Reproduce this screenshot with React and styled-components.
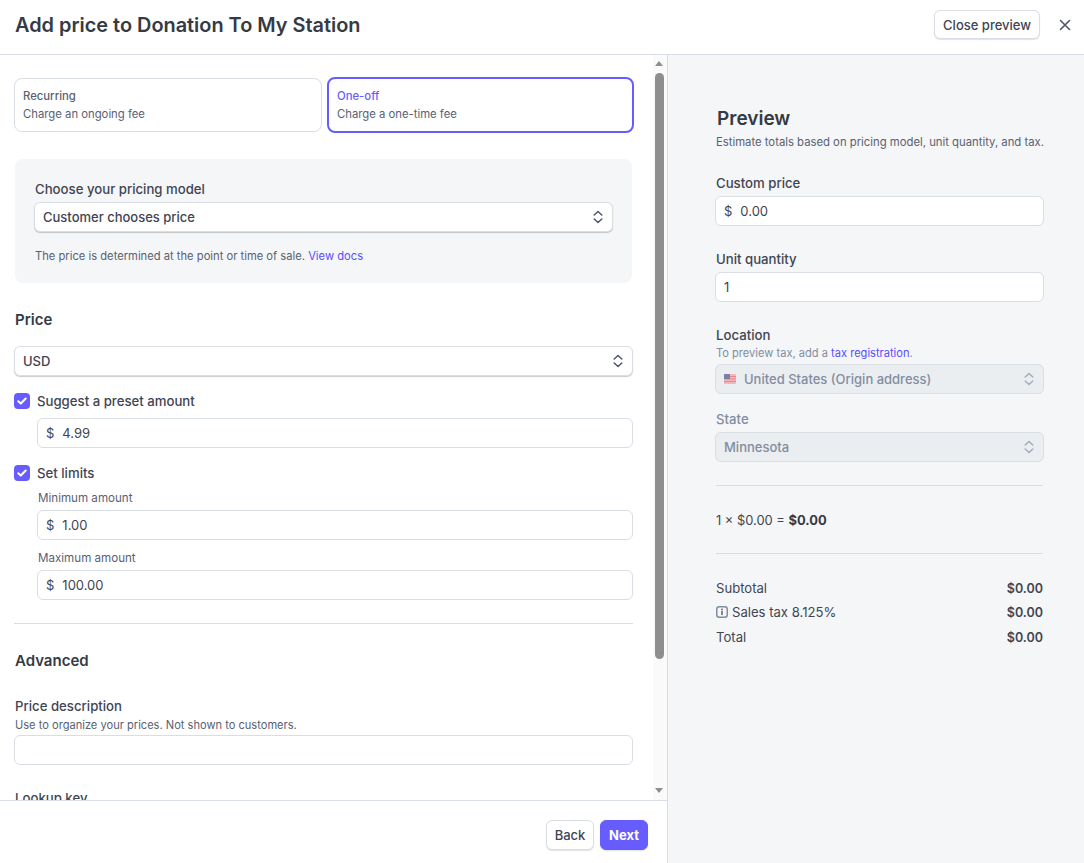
import React from "react";
import styled, { createGlobalStyle } from "styled-components";

const Global = createGlobalStyle`
  html, body { margin: 0; padding: 0; height: 100%; background: #fff; }
  body { font-family: Inter, "Liberation Sans", sans-serif; color: #353a44; }
  * { box-sizing: border-box; }
`;

const Page = styled.div`
  width: 1084px; height: 863px; display: flex; flex-direction: column; overflow: hidden;
`;
const Header = styled.header`
  height: 55px; flex: none; display: flex; align-items: center; padding: 0 11px 5px 15px;
  border-bottom: 1px solid #d8dee4; background: #fff;
`;
const Title = styled.h1`
  margin: 0; flex: 1; font-size: 19.9px; line-height: 28px; font-weight: 600; color: #353a44;
`;
const Button = styled.button`
  font-family: inherit; font-size: 13px; font-weight: 500; line-height: 20px; height: 29px; padding: 0 8px;
  color: #414552; background: #fff; border: 1px solid #d8dee4; border-radius: 6px;
  box-shadow: 0 1px 1px rgba(0,0,0,.12);
`;
const PrimaryButton = styled(Button)`
  background: #675dff; color: #fff; border-color: #675dff; font-weight: 700;
`;
const CloseX = styled.button`
  width: 16px; height: 16px; margin-left: 17px; padding: 0; border: 0; background: none; display: flex; color: #50566b;
`;
const Body = styled.div`
  flex: 1; min-height: 0; display: flex;
`;
const Left = styled.section`
  width: 668px; flex: none; display: flex; flex-direction: column; border-right: 1px solid #d8dee4; background: #fff;
`;
const ScrollFrame = styled.div`
  flex: 1; min-height: 0; display: flex;
`;
const Scroll = styled.div`
  flex: 1; min-width: 0; overflow: hidden; padding: 22px 20px 0 14px;
`;
const ScrollBar = styled.div`
  width: 14px; flex: none; background: #fafafa; display: flex; flex-direction: column; align-items: flex-start; padding-left: 2px;
`;
const ScrollArrow = styled.div`
  width: 0; height: 0; flex: none;
  border-left: 4.5px solid transparent; border-right: 4.5px solid transparent;
  ${p => (p.$down
    ? "border-top: 5px solid #8e8e8e; margin-top: auto; margin-bottom: 7px;"
    : "border-bottom: 5px solid #8e8e8e; margin-top: 6px;")}
`;
const ScrollThumb = styled.div`
  width: 9px; height: 586px; flex: none; margin-top: 7px; border-radius: 5px; background: #8e8e8e;
`;
const Footer = styled.footer`
  height: 63px; flex: none; border-top: 1px solid #d8dee4; display: flex; justify-content: flex-end; align-items: flex-start;
  gap: 6px; padding: 19px 19px 0 0;
  & > button { height: 30px; width: 48px; padding: 0; }
`;
const CardRow = styled.div`
  display: grid; grid-template-columns: 308px 307px; gap: 5px; align-items: center;
`;
const Card = styled.div`
  height: ${p => (p.$active ? "56px" : "54px")};
  padding: 8px;
  border-radius: 8px;
  border: ${p => (p.$active ? "2px solid #675dff" : "1px solid #d8dee4")};
  font-size: 11.3px; line-height: 18px; color: #596171;
`;
const CardTitle = styled.div`
  font-weight: 500; color: ${p => (p.$active ? "#675dff" : "#596171")};
`;
const ModelBox = styled.div`
  margin: 26px 1px 0; height: 124px; padding: 20px 19px; background: #f5f6f8; border-radius: 8px;
`;
const Label = styled.div`
  font-size: 13.2px; line-height: 20px; font-weight: 500; color: ${p => (p.$muted ? "#818da0" : "#414552")};
  margin: ${p => p.$top || 0}px 0 0 1px;
`;
const SmallLabel = styled.div`
  font-size: 11.6px; line-height: 16px; color: #596171; margin: ${p => p.$top || 0}px 0 4px 1px;
`;
const Help = styled.div`
  font-size: ${p => p.$size || 11.1}px; line-height: 16px; color: ${p => (p.$muted ? "#818da0" : "#596171")};
  margin: ${p => p.$top || 0}px 0 ${p => p.$bottom || 0}px 1px;
`;
const Note = styled.div`
  font-size: 11.2px; line-height: 16px; color: #596171; margin: 16px 0 0 1px;
`;
const Link = styled.a`
  color: #5b4dff; text-decoration: none;
`;
const Select = styled.div`
  height: 30px; display: flex; align-items: center; justify-content: space-between; gap: 8px; padding: 0 8px;
  margin-top: ${p => p.$top || 0}px;
  border: 1px solid #d8dee4; border-radius: 6px;
  background: ${p => (p.$disabled ? "#ebeef1" : "#fff")};
  box-shadow: ${p => (p.$disabled ? "none" : "0 1px 1px rgba(0,0,0,.2)")};
  font-size: 13px; font-weight: 550; color: ${p => (p.$disabled ? "#818da0" : "#414552")};
`;
const SelectValue = styled.span`
  display: flex; align-items: center; gap: 8px;
`;
const Input = styled.div`
  height: 30px; display: flex; align-items: center; padding: 0 8px; gap: 8px;
  margin-top: ${p => p.$top || 0}px;
  border: 1px solid #d8dee4; border-radius: 6px; background: #fff;
  font-size: 13px; color: #414552;
`;
const Heading = styled.h2`
  margin: ${p => p.$top}px 0 ${p => p.$bottom}px 1px; font-size: 15px; line-height: 20px; font-weight: 600; color: #353a44;
`;
const CheckRow = styled.div`
  display: flex; align-items: center; gap: 7px; height: 16px; margin-top: ${p => p.$top}px; margin-bottom: ${p => p.$bottom || 0}px;
  font-size: 13.2px; font-weight: 500; color: #414552;
`;
const CheckBox = styled.span`
  width: 16px; height: 16px; flex: none; border-radius: 4px; background: #675dff; display: flex; align-items: center; justify-content: center;
`;
const Indent = styled.div`
  margin-left: 23px;
`;
const Divider = styled.hr`
  border: 0; border-top: 1px solid #d8dee4; margin: ${p => p.$top}px ${p => p.$inset || 0}px ${p => p.$bottom}px;
`;
const Right = styled.aside`
  flex: 1; background: #f5f6f8; padding: 50px 40px 0 47px;
`;
const PreviewTitle = styled.h2`
  margin: 0 0 0 2px; font-size: 19px; line-height: 28px; font-weight: 600; color: #353a44;
`;
const Total = styled.div`
  display: flex; justify-content: space-between; align-items: center; height: 24.5px; padding: 0 1px; font-size: 13.1px; color: #414552;
`;
const TotalValue = styled.span`
  font-size: 12.5px; font-weight: 600; color: #414552;
`;
const TaxLabel = styled.span`
  display: flex; align-items: center; gap: 4px; margin-top: -1px;
`;
const Equation = styled.div`
  margin-left: 1px; font-size: 12.9px; line-height: 20px; color: #414552;
`;
const Strong = styled.strong`
  font-weight: 700; color: #353a44;
`;

const Updown = ({ color = "#50566b" }) => (
  <svg width="12" height="14" viewBox="0 0 12 14" fill="none" stroke={color} strokeWidth="1.5" strokeLinecap="round" strokeLinejoin="round">
    <path d="M2.2 5 6 1.5 9.8 5M2.2 9 6 12.5 9.8 9" />
  </svg>
);
const Check = () => (
  <svg width="10" height="8" viewBox="0 0 10 8" fill="none" stroke="#fff" strokeWidth="2" strokeLinecap="round" strokeLinejoin="round">
    <path d="M1.3 4.2 3.8 6.5 8.7 1.5" />
  </svg>
);
const Flag = () => (
  <svg width="12" height="10" viewBox="0 0 12 10">
    <rect width="12" height="10" rx="1" fill="#f3b7bb" />
    <path d="M0 2.5h12M0 5h12M0 7.5h12" stroke="#e8848b" strokeWidth="1" />
    <rect width="6" height="5" fill="#7a7fa8" />
  </svg>
);
const Info = () => (
  <svg width="12" height="12" viewBox="0 0 12 12" fill="none">
    <rect x=".75" y=".75" width="10.5" height="10.5" rx="2.5" stroke="#818da0" strokeWidth="1.5" />
    <path d="M6 5.4v3" stroke="#596171" strokeWidth="1.5" strokeLinecap="round" />
    <circle cx="6" cy="3.4" r=".9" fill="#596171" />
  </svg>
);

export default function App() {
  return (
    <Page>
      <Global />
      <Header>
        <Title>Add price to Donation To My Station</Title>
        <Button>Close preview</Button>
        <CloseX aria-label="Close">
          <svg width="16" height="16" viewBox="0 0 16 16" fill="none" stroke="currentColor" strokeWidth="1.6" strokeLinecap="round">
            <path d="M3.5 3.5 12.5 12.5M12.5 3.5 3.5 12.5" />
          </svg>
        </CloseX>
      </Header>
      <Body>
        <Left>
          <ScrollFrame>
            <Scroll>
              <CardRow>
                <Card>
                  <CardTitle>Recurring</CardTitle>
                  <div>Charge an ongoing fee</div>
                </Card>
                <Card $active>
                  <CardTitle $active>One-off</CardTitle>
                  <div>Charge a one-time fee</div>
                </Card>
              </CardRow>
              <ModelBox>
                <Label>Choose your pricing model</Label>
                <Select $top={3}>
                  <span>Customer chooses price</span>
                  <Updown />
                </Select>
                <Note>
                  The price is determined at the point or time of sale. <Link>View docs</Link>
                </Note>
              </ModelBox>
              <Heading $top={27} $bottom={16}>Price</Heading>
              <Select>
                <span>USD</span>
                <Updown />
              </Select>
              <CheckRow $top={17} $bottom={9}>
                <CheckBox><Check /></CheckBox>
                Suggest a preset amount
              </CheckRow>
              <Indent>
                <Input><span>$</span><span>4.99</span></Input>
              </Indent>
              <CheckRow $top={17}>
                <CheckBox><Check /></CheckBox>
                Set limits
              </CheckRow>
              <Indent>
                <SmallLabel $top={9}>Minimum amount</SmallLabel>
                <Input><span>$</span><span>1.00</span></Input>
                <SmallLabel $top={10}>Maximum amount</SmallLabel>
                <Input><span>$</span><span>100.00</span></Input>
              </Indent>
              <Divider $top={23} $bottom={27} />
              <Heading $top={0} $bottom={25}>Advanced</Heading>
              <Label>Price description</Label>
              <Help $top={1}>Use to organize your prices. Not shown to customers.</Help>
              <Input $top={2} />
              <Label $top={23}>Lookup key</Label>
              <Input $top={3} />
            </Scroll>
            <ScrollBar>
              <ScrollArrow />
              <ScrollThumb />
              <ScrollArrow $down />
            </ScrollBar>
          </ScrollFrame>
          <Footer>
            <Button>Back</Button>
            <PrimaryButton>Next</PrimaryButton>
          </Footer>
        </Left>
        <Right>
          <PreviewTitle>Preview</PreviewTitle>
          <Help $size={11.3} $top={1}>Estimate totals based on pricing model, unit quantity, and tax.</Help>
          <Label $top={23}>Custom price</Label>
          <Input $top={3}><span>$</span><span>0.00</span></Input>
          <Label $top={23}>Unit quantity</Label>
          <Input $top={3}>1</Input>
          <Label $top={23}>Location</Label>
          <Help $muted $bottom={3}>To preview tax, add a <Link>tax registration</Link>.</Help>
          <Select $disabled>
            <SelectValue><Flag /> United States (Origin address)</SelectValue>
            <Updown color="#a3acba" />
          </Select>
          <Label $top={15} $muted>State</Label>
          <Select $disabled $top={3}>
            <span>Minnesota</span>
            <Updown color="#a3acba" />
          </Select>
          <Divider $top={23} $bottom={25} $inset={1} />
          <Equation>1 × $0.00 = <Strong>$0.00</Strong></Equation>
          <Divider $top={22} $bottom={22} $inset={1} />
          <Total><span>Subtotal</span><TotalValue>$0.00</TotalValue></Total>
          <Total><TaxLabel><Info /> Sales tax 8.125%</TaxLabel><TotalValue>$0.00</TotalValue></Total>
          <Total><span>Total</span><TotalValue>$0.00</TotalValue></Total>
        </Right>
      </Body>
    </Page>
  );
}
